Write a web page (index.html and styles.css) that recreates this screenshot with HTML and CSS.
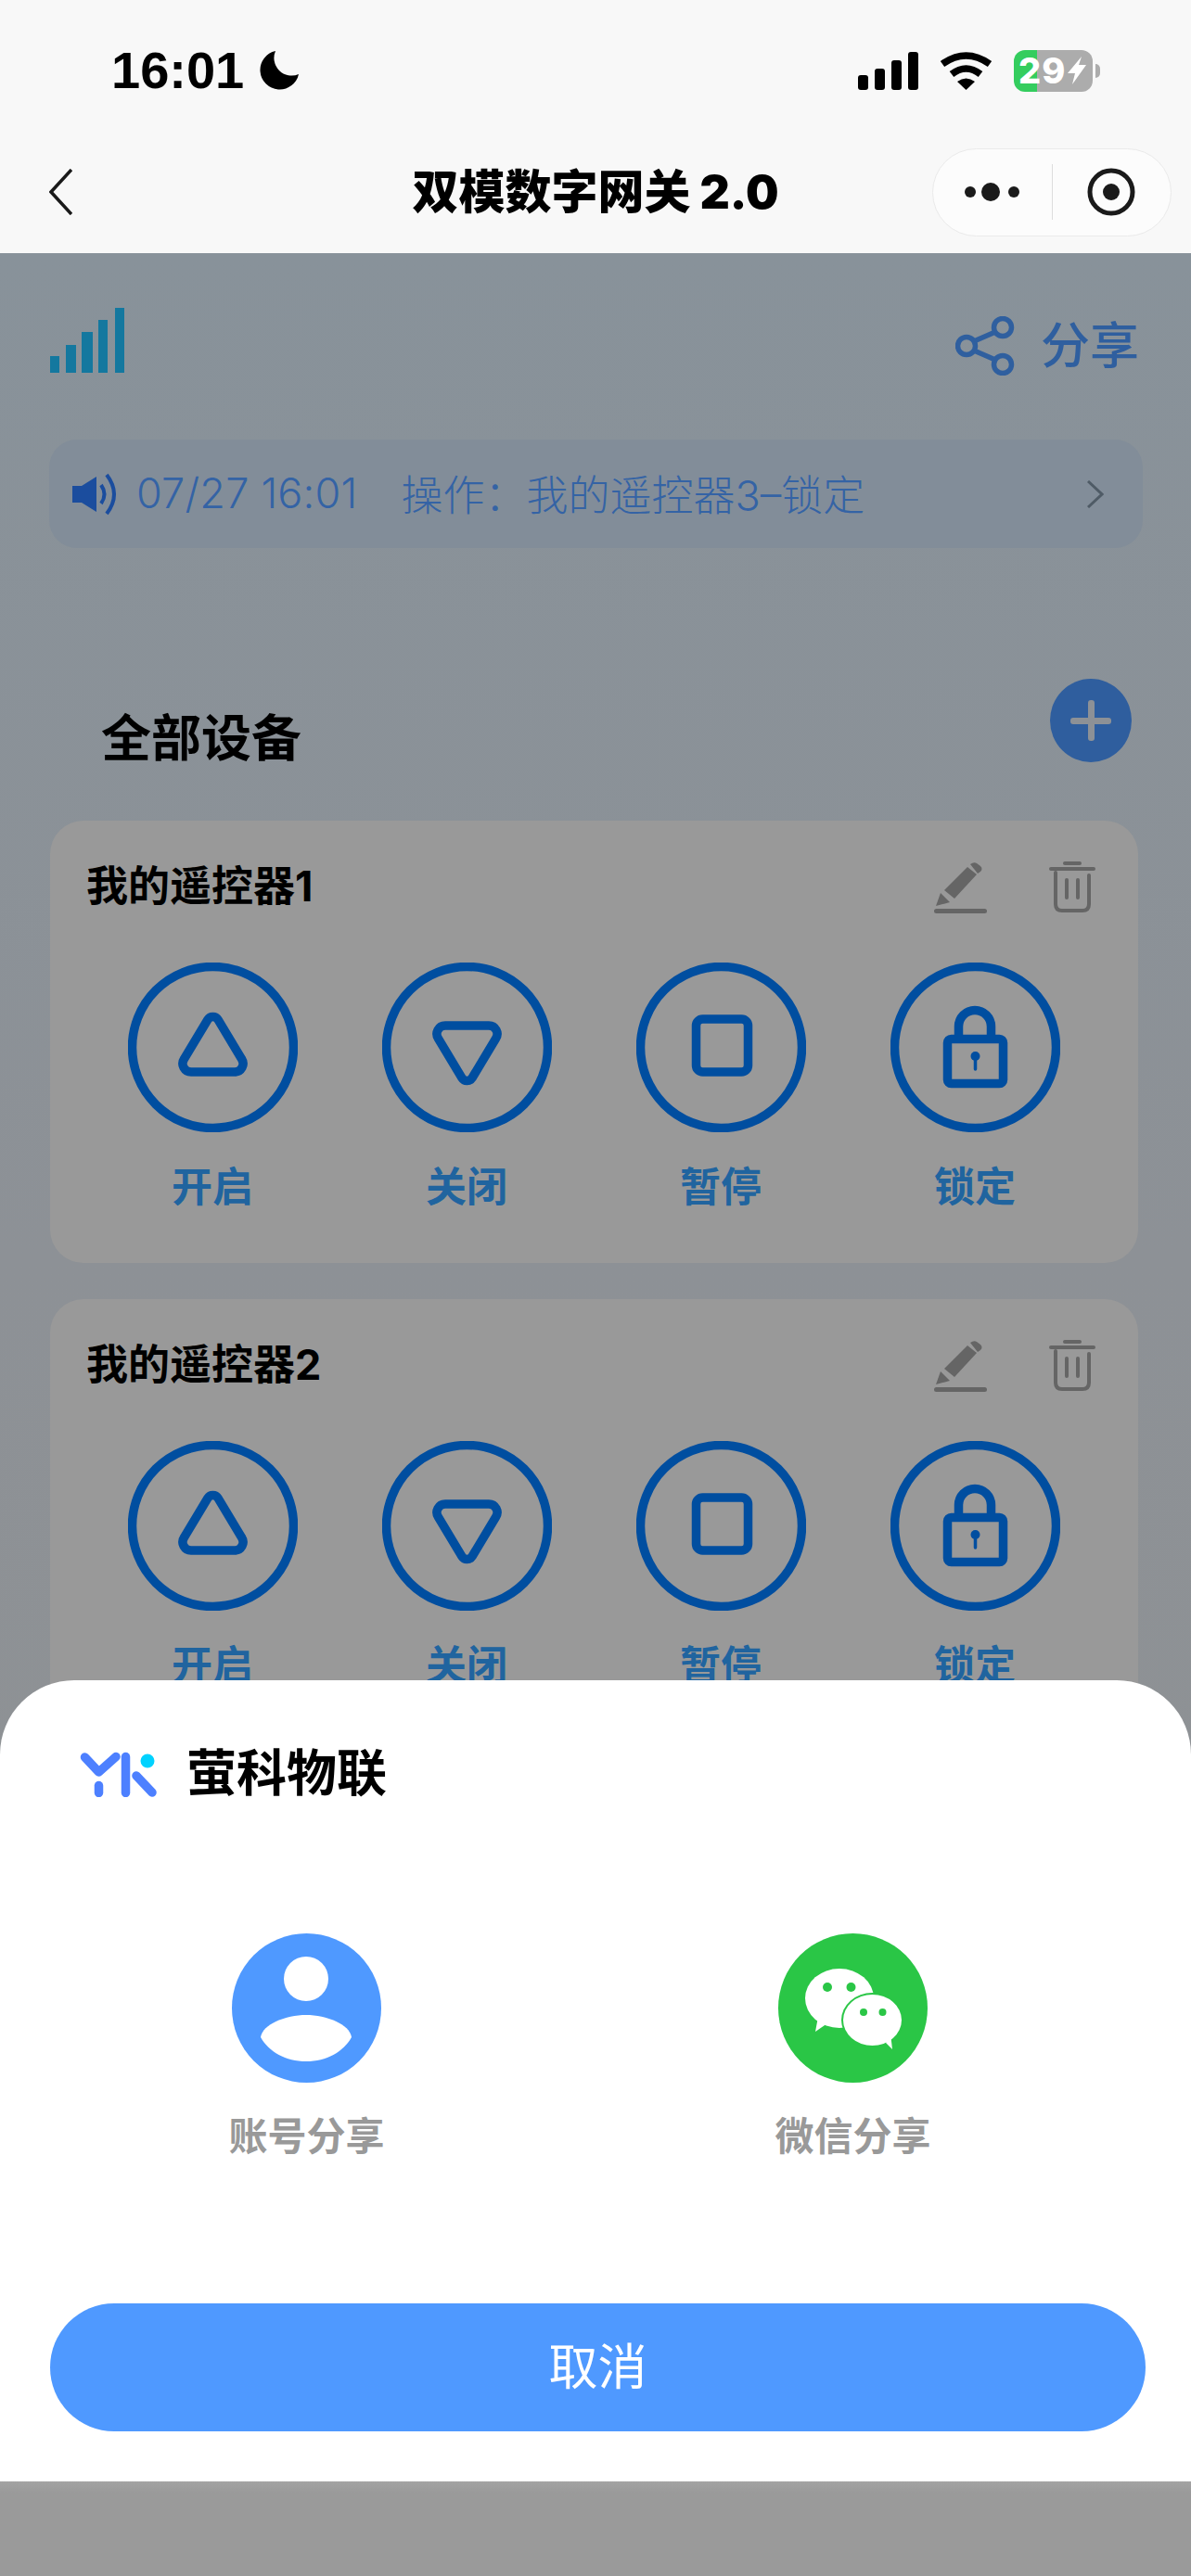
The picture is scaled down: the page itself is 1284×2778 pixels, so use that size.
FILE: index.html

```html
<!DOCTYPE html>
<html lang="zh-CN">
<head>
    <meta charset="UTF-8">
    <title>双模数字网关 2.0</title>
    <meta name="viewport" content="width=device-width, initial-scale=1.0">
    <link rel="stylesheet" href="styles.css">
</head>
<body>

<svg class="icon-defs" aria-hidden="true">
    <symbol id="i-edit" viewBox="0 0 57 57">
        <path class="fill-grey" d="M2 49 L7 35 L17 45 Z"/>
        <path class="fill-grey" d="M11 32 L36 7 L46 15 L22 41 Z"/>
        <path class="fill-grey" d="M39 4 Q43 1 46 3 L50 6 Q53 9 50 12 L47 14 Z"/>
        <rect class="fill-grey" x="0" y="52" width="57" height="5" rx="2.5"/>
    </symbol>
    <symbol id="i-trash" viewBox="0 0 50 56">
        <g class="line-grey">
            <path d="M2 9 H48"/>
            <path d="M17 3 H33"/>
            <path d="M7 13 V47 Q7 54 14 54 H36 Q43 54 43 47 V16"/>
            <path d="M19 21 V40"/>
            <path d="M31 21 V40"/>
        </g>
    </symbol>
    <symbol id="i-up" viewBox="0 0 183 183">
        <g class="line-blue">
            <circle cx="91.5" cy="91.5" r="87"/>
            <g transform="translate(53 52)">
                <path d="M33 9.5 a6.5 6.5 0 0 1 11 0 L69.5 52 a9 9 0 0 1 -7.5 14 H15 a9 9 0 0 1 -7.5 -14 Z"/>
            </g>
        </g>
    </symbol>
    <symbol id="i-down" viewBox="0 0 183 183">
        <g class="line-blue">
            <circle cx="91.5" cy="91.5" r="87"/>
            <g transform="translate(130 134) rotate(180)">
                <path d="M33 9.5 a6.5 6.5 0 0 1 11 0 L69.5 52 a9 9 0 0 1 -7.5 14 H15 a9 9 0 0 1 -7.5 -14 Z"/>
            </g>
        </g>
    </symbol>
    <symbol id="i-stop" viewBox="0 0 183 183">
        <g class="line-blue">
            <circle cx="91.5" cy="91.5" r="87"/>
            <rect x="64.5" y="61" width="56" height="57" rx="7"/>
        </g>
    </symbol>
    <symbol id="i-lock" viewBox="0 0 183 183">
        <g class="line-blue">
            <circle cx="91.5" cy="91.5" r="87"/>
            <rect x="61.5" y="82.5" width="60" height="48" rx="4"/>
            <path d="M73.5 80 V69 a17.5 17.5 0 0 1 35 0 V80"/>
            <path class="thin" d="M91.5 103 V115"/>
        </g>
        <circle class="fill-blue" cx="91.5" cy="101" r="5"/>
    </symbol>
</svg>

<div class="page">

    <header class="top">
        <div class="status">
            <div class="clock">
                <span class="time">16:01</span>
                <svg class="moon" viewBox="0 0 42 42"><path d="M17 0 A21 21 0 1 0 42 25 A19 19 0 0 1 17 0 Z"/></svg>
            </div>
            <div class="status-icons">
                <svg class="cell" viewBox="0 0 65 41">
                    <rect x="0" y="25" width="11" height="16" rx="3"/>
                    <rect x="18" y="18" width="11" height="23" rx="3"/>
                    <rect x="36" y="9" width="11" height="32" rx="3"/>
                    <rect x="54" y="0" width="11" height="41" rx="3"/>
                </svg>
                <svg class="wifi" viewBox="0 0 57 42">
                    <path class="wifi-arc" d="M3 14 Q28.5 -4 54 14"/>
                    <path class="wifi-arc" d="M13 25 Q28.5 13 44 25"/>
                    <path d="M19 33 Q28.5 26 38 33 L28.5 42 Z"/>
                </svg>
                <div class="battery">
                    <div class="battery-body">
                        <span class="battery-num">29</span>
                        <svg class="bolt" viewBox="0 0 20 30"><path d="M15 0 L0 18 H8 L5 30 L20 9 H12 Z"/></svg>
                    </div>
                    <div class="battery-tip"></div>
                </div>
            </div>
        </div>
        <nav class="nav">
            <svg class="back" viewBox="0 0 25 50"><path d="M24 1 L2 25 L24 49"/></svg>
            <div class="nav-title">双模数字网关 2.0</div>
            <div class="capsule">
                <div class="capsule-part">
                    <svg class="more" viewBox="0 0 60 20">
                        <circle cx="6" cy="10" r="6"/>
                        <circle cx="28" cy="10" r="10"/>
                        <circle cx="53" cy="10" r="6"/>
                    </svg>
                </div>
                <div class="capsule-line"></div>
                <div class="capsule-part">
                    <svg class="target" viewBox="0 0 52 52">
                        <circle class="target-ring" cx="26" cy="26" r="23"/>
                        <circle cx="26" cy="26" r="9"/>
                    </svg>
                </div>
            </div>
        </nav>
    </header>

    <main class="main">
        <div class="tool-row">
            <svg class="level" viewBox="0 0 80 70">
                <rect x="0" y="52" width="10" height="18"/>
                <rect x="17" y="40" width="11" height="30"/>
                <rect x="34" y="26" width="12" height="44"/>
                <rect x="52" y="13" width="10" height="57"/>
                <rect x="70" y="0" width="10" height="70"/>
            </svg>
            <div class="share-link">
                <svg class="share-icon" viewBox="0 0 64 64">
                    <circle cx="51" cy="12" r="9.5"/>
                    <circle cx="51" cy="52" r="9.5"/>
                    <circle cx="12" cy="32" r="9.5"/>
                    <path d="M20 27 L43 17"/>
                    <path d="M20 37 L43 47"/>
                </svg>
                <span>分享</span>
            </div>
        </div>

        <div class="notice">
            <svg class="speaker" viewBox="0 0 50 46">
                <path class="speaker-body" d="M0 14 H10 L26 4 V42 L10 32 H0 Z"/>
                <path class="speaker-wave" d="M31 13 Q38 23 31 33"/>
                <path class="speaker-wave" d="M37 2 Q53 23 37 44"/>
            </svg>
            <span class="notice-time">07/27 16:01</span>
            <span class="notice-text">操作：我的遥控器3–锁定</span>
            <svg class="notice-arrow" viewBox="0 0 18 30"><path d="M1 1 L16 15 L1 29"/></svg>
        </div>

        <div class="section-head">
            <h2>全部设备</h2>
            <div class="add-btn"></div>
        </div>

        <section class="device">
            <div class="device-head">
                <span class="device-name">我的遥控器1</span>
                <div class="device-tools">
                    <svg class="tool-edit"><use href="#i-edit"/></svg>
                    <svg class="tool-trash"><use href="#i-trash"/></svg>
                </div>
            </div>
            <div class="device-btns">
                <div class="ctrl"><svg class="ctrl-icon"><use href="#i-up"/></svg><span>开启</span></div>
                <div class="ctrl"><svg class="ctrl-icon"><use href="#i-down"/></svg><span>关闭</span></div>
                <div class="ctrl"><svg class="ctrl-icon"><use href="#i-stop"/></svg><span>暂停</span></div>
                <div class="ctrl"><svg class="ctrl-icon ctrl-soft"><use href="#i-lock"/></svg><span>锁定</span></div>
            </div>
        </section>

        <section class="device">
            <div class="device-head">
                <span class="device-name">我的遥控器2</span>
                <div class="device-tools">
                    <svg class="tool-edit"><use href="#i-edit"/></svg>
                    <svg class="tool-trash"><use href="#i-trash"/></svg>
                </div>
            </div>
            <div class="device-btns">
                <div class="ctrl"><svg class="ctrl-icon"><use href="#i-up"/></svg><span>开启</span></div>
                <div class="ctrl"><svg class="ctrl-icon"><use href="#i-down"/></svg><span>关闭</span></div>
                <div class="ctrl"><svg class="ctrl-icon"><use href="#i-stop"/></svg><span>暂停</span></div>
                <div class="ctrl"><svg class="ctrl-icon ctrl-soft"><use href="#i-lock"/></svg><span>锁定</span></div>
            </div>
        </section>
    </main>

    <div class="home-strip"></div>

    <div class="sheet">
        <div class="sheet-brand">
            <svg class="brand-logo" viewBox="0 0 83 49">
                <path class="logo-line" d="M5.5 6 L20.5 22 L39 5.5"/>
                <path class="logo-line" d="M20.5 36.5 V44.5"/>
                <path class="logo-line" d="M49.5 5.5 V44.5"/>
                <path class="logo-line" d="M61 26 L78 44"/>
                <circle class="logo-dot" cx="73" cy="10" r="7.5"/>
            </svg>
            <span>萤科物联</span>
        </div>
        <div class="sheet-options">
            <div class="option">
                <svg class="option-icon" viewBox="0 0 161 161">
                    <circle class="fill-account" cx="80.5" cy="80.5" r="80.5"/>
                    <circle class="fill-white" cx="80" cy="49" r="24"/>
                    <path class="fill-white" d="M31 112 C33 98 58 88 80 88 C102 88 127 98 129 112 C120 128 102 138 80 138 C58 138 40 128 31 112 Z"/>
                </svg>
                <span>账号分享</span>
            </div>
            <div class="option">
                <svg class="option-icon" viewBox="0 0 161 161">
                    <circle class="fill-wechat" cx="80.5" cy="80.5" r="80.5"/>
                    <ellipse class="fill-white" cx="66" cy="70" rx="37" ry="32"/>
                    <path class="fill-white" d="M43 90 L40 106 L53 97 Z"/>
                    <circle class="fill-wechat" cx="53" cy="58" r="5"/>
                    <circle class="fill-wechat" cx="78.5" cy="58" r="5"/>
                    <ellipse class="fill-wechat" cx="101.5" cy="93.5" rx="33.5" ry="29.5"/>
                    <ellipse class="fill-white" cx="101.5" cy="93.5" rx="31.5" ry="27.5"/>
                    <path class="fill-white" d="M116 118 L123 125 L121 108 Z"/>
                    <circle class="fill-wechat" cx="92" cy="85" r="4"/>
                    <circle class="fill-wechat" cx="112.5" cy="85" r="4"/>
                </svg>
                <span>微信分享</span>
            </div>
        </div>
        <div class="sheet-cancel">取消</div>
    </div>

</div>

</body>
</html>
```

FILE: styles.css

```css
* { box-sizing: border-box; }
html, body { margin: 0; padding: 0; }
body { font-family: "Inter", "Noto Sans CJK SC", sans-serif; background: #999; }
svg { display: block; flex-shrink: 0; }
.icon-defs { position: absolute; width: 0; height: 0; }

.page { position: relative; width: 1284px; height: 2778px; overflow: hidden; display: flex; flex-direction: column; background: #9a9a9a; }

/* top bars */
.top { background: #f8f8f8; height: 273px; flex-shrink: 0; }
.status { height: 152px; display: flex; justify-content: space-between; align-items: center; padding: 0 98px 0 120px; }
.clock { display: flex; align-items: center; gap: 17px; }
.time { font-family: "Liberation Sans", sans-serif; font-size: 56px; font-weight: 700; color: #000; line-height: 44px; }
.moon { width: 42px; height: 42px; fill: #000; }
.status-icons { display: flex; align-items: center; gap: 23px; }
.cell { width: 65px; height: 41px; fill: #000; }
.wifi { width: 57px; height: 42px; fill: #000; }
.wifi-arc { fill: none; stroke: #000; stroke-width: 7.5; }
.battery { display: flex; align-items: center; gap: 3px; }
.battery-body { width: 85px; height: 45px; border-radius: 12px; background: linear-gradient(90deg, #34cd5e 25px, #acacac 25px); display: flex; align-items: center; padding-left: 5px; gap: 2px; color: #fff; font-size: 38px; font-weight: 800; line-height: 45px; }
.battery-num { letter-spacing: 1px; }
.bolt { width: 20px; height: 30px; fill: #fff; }
.battery-tip { width: 5px; height: 15px; background: #acacac; border-radius: 0 8px 8px 0; }

.nav { height: 110px; display: grid; grid-template-columns: 1fr auto 1fr; align-items: center; padding: 0 21px; }
.back { width: 25px; height: 50px; margin-left: 32px; fill: none; stroke: #1a1a1a; stroke-width: 3.5; }
.nav-title { font-size: 50px; font-weight: 900; color: #000; line-height: 60px; white-space: nowrap; }
.capsule { justify-self: end; width: 258px; height: 95px; border-radius: 48px; background: #fcfcfc; border: 1px solid #eaeaea; display: flex; align-items: center; }
.capsule-part { flex: 1; display: flex; justify-content: center; }
.capsule-line { width: 1px; height: 60px; background: #ddd; }
.more { width: 60px; height: 20px; fill: #1a1a1a; }
.target { width: 52px; height: 52px; fill: #1a1a1a; }
.target-ring { fill: none; stroke: #1a1a1a; stroke-width: 5; }

/* page body, dimmed */
.main { height: 2403px; flex-shrink: 0; background: linear-gradient(180deg, #88929a 0%, #8d9196 45%, #8f9293 100%); overflow: hidden; }
.tool-row { display: flex; justify-content: space-between; align-items: flex-start; height: 73px; margin-top: 59px; padding: 0 56px 0 54px; }
.level { width: 80px; height: 70px; fill: #14789f; }
.share-link { display: flex; align-items: center; gap: 28px; margin-top: 9px; color: #2f5f9f; font-size: 53px; font-weight: 500; line-height: 64px; }
.share-icon { width: 64px; height: 64px; fill: none; stroke: #2f5f9f; stroke-width: 5.5; }

.notice { display: flex; align-items: center; height: 117px; margin: 69px 52px 0 53px; padding: 0 42px 0 25px; background: #828d99; border-radius: 30px; color: #3463a5; font-size: 45px; font-weight: 300; }
.speaker { width: 50px; height: 46px; margin-right: 19px; }
.speaker-body { fill: #1b4d9e; }
.speaker-wave { fill: none; stroke: #1b4d9e; stroke-width: 4; }
.notice-time { margin-right: 47px; padding-bottom: 3px; letter-spacing: 0.2px; }
.notice-text { flex: 1; padding-bottom: 3px; }
.notice-arrow { width: 18px; height: 30px; fill: none; stroke: #4f5b66; stroke-width: 3; }

.section-head { display: flex; justify-content: space-between; align-items: flex-end; height: 90px; margin-top: 141px; padding: 0 64px 0 109px; }
.section-head h2 { margin: 0; font-size: 54px; font-weight: 700; color: #000; line-height: 50px; }
.add-btn { position: relative; width: 88px; height: 90px; border-radius: 50%; background: #2f5e9e; }
.add-btn::before, .add-btn::after { content: ""; position: absolute; background: #8d9196; border-radius: 3px; }
.add-btn::before { left: 22px; right: 22px; top: 42px; height: 7px; }
.add-btn::after { top: 23px; bottom: 23px; left: 41px; width: 7px; }

.device { height: 477px; margin: 39px 57px 0 54px; padding: 36px 39px 0 38px; background: #999; border-radius: 36px; }
.section-head + .device { margin-top: 63px; }
.device-head { display: flex; justify-content: space-between; align-items: center; height: 70px; padding: 0 7px 0 1px; }
.device-name { font-size: 45px; font-weight: 700; color: #000; line-height: 50px; }
.device-tools { display: flex; align-items: center; gap: 67px; }
.tool-edit { width: 57px; height: 57px; }
.tool-trash { width: 50px; height: 56px; }
.fill-grey { fill: #656565; }
.line-grey { fill: none; stroke: #656565; stroke-width: 4; stroke-linecap: round; }
.device-btns { display: grid; grid-template-columns: repeat(4, 1fr); margin-top: 47px; }
.ctrl { display: flex; flex-direction: column; align-items: center; color: #20649f; font-size: 44px; font-weight: 700; line-height: 60px; }
.ctrl-icon { width: 183px; height: 183px; margin-bottom: 29px; }
.ctrl-soft { filter: blur(0.6px); }
.line-blue { fill: none; stroke: #004ea0; stroke-width: 9.5; }
.line-blue .thin { stroke-width: 3.5; stroke-linecap: round; }
.fill-blue { fill: #004ea0; }

.home-strip { flex: 1; background: linear-gradient(180deg, #a3a3a3 0, #9a9a9a 12px); }

/* share sheet over the dimmed page */
.sheet { position: absolute; left: 0; right: 0; top: 1812px; height: 864px; padding-top: 76px; background: #fff; border-radius: 80px 80px 0 0; }
.sheet-brand { display: flex; align-items: center; gap: 32px; padding-left: 86px; font-size: 54px; font-weight: 700; color: #000; line-height: 50px; }
.brand-logo { width: 83px; height: 49px; }
.logo-line { fill: none; stroke: #4d80ff; stroke-width: 9.5; stroke-linecap: round; stroke-linejoin: round; }
.logo-dot { fill: #00d2ff; }
.sheet-options { display: grid; grid-template-columns: 589px 589px; margin-top: 147px; padding-left: 36px; }
.option { display: flex; flex-direction: column; align-items: center; color: #999; font-size: 42px; font-weight: 700; line-height: 60px; }
.option-icon { width: 161px; height: 161px; margin-bottom: 28px; }
.fill-white { fill: #fff; }
.fill-account { fill: #4f99ff; }
.fill-wechat { fill: #2ac646; }
.sheet-cancel { height: 138px; margin: 150px 49px 0 54px; border-radius: 69px; background: #4f99ff; color: #fff; font-size: 53px; font-weight: 400; line-height: 138px; text-align: center; }
```
